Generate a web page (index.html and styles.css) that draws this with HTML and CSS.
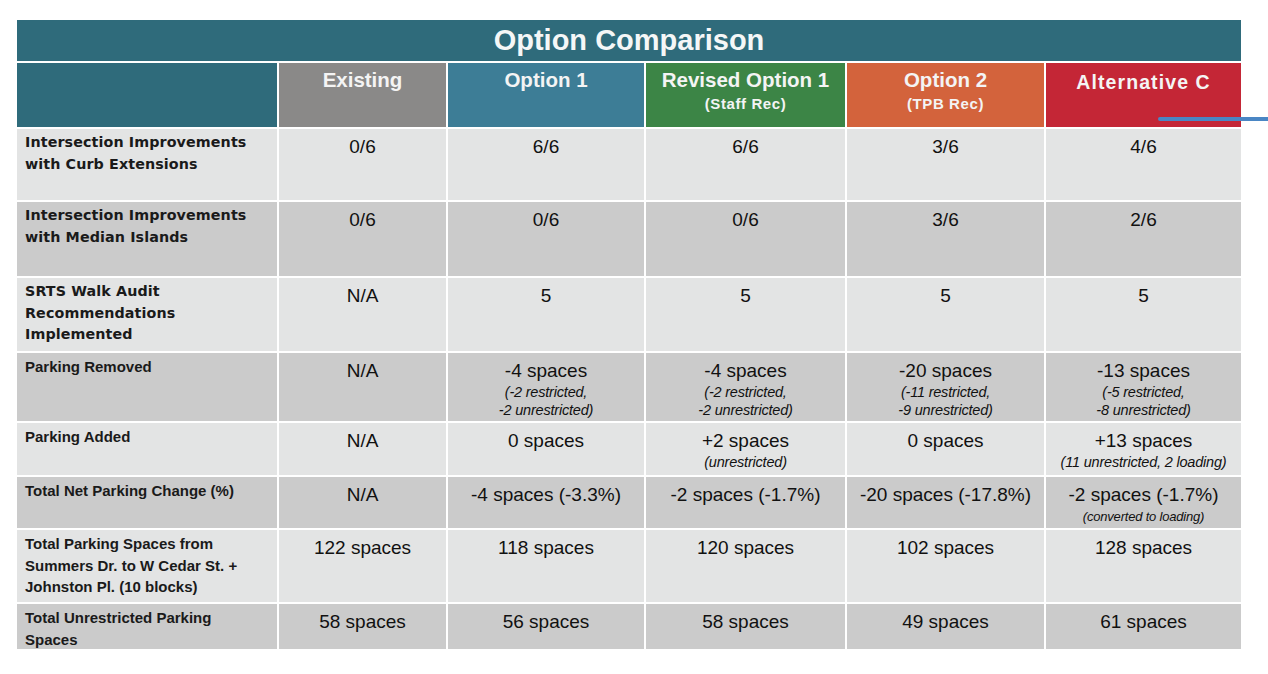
FILE: index.html
```html
<!DOCTYPE html>
<html lang="en">
<head>
<meta charset="utf-8">
<title>Option Comparison</title>
<link rel="stylesheet" href="styles.css">
</head>
<body>
<div class="page">
  <div class="sheet">
    <div class="title">Option Comparison</div>
    <div class="grid">
      <div class="hd hd-blank"></div>
      <div class="hd hd-existing">Existing</div>
      <div class="hd hd-opt1">Option 1</div>
      <div class="hd hd-rev">Revised Option 1<span class="sub">(Staff Rec)</span></div>
      <div class="hd hd-opt2">Option 2<span class="sub">(TPB Rec)</span></div>
      <div class="hd hd-altc">Alternative C</div>

      <div class="lbl wide light">Intersection Improvements<br>with Curb Extensions</div>
      <div class="val light">0/6</div>
      <div class="val light">6/6</div>
      <div class="val light">6/6</div>
      <div class="val light">3/6</div>
      <div class="val light">4/6</div>

      <div class="lbl wide dark">Intersection Improvements<br>with Median Islands</div>
      <div class="val dark">0/6</div>
      <div class="val dark">0/6</div>
      <div class="val dark">0/6</div>
      <div class="val dark">3/6</div>
      <div class="val dark">2/6</div>

      <div class="lbl wide light">SRTS Walk Audit<br>Recommendations<br>Implemented</div>
      <div class="val light">N/A</div>
      <div class="val light">5</div>
      <div class="val light">5</div>
      <div class="val light">5</div>
      <div class="val light">5</div>

      <div class="lbl dark">Parking Removed</div>
      <div class="val dark">N/A</div>
      <div class="val dark">-4 spaces<span class="note">(-2 restricted,<br>-2 unrestricted)</span></div>
      <div class="val dark">-4 spaces<span class="note">(-2 restricted,<br>-2 unrestricted)</span></div>
      <div class="val dark">-20 spaces<span class="note">(-11 restricted,<br>-9 unrestricted)</span></div>
      <div class="val dark">-13 spaces<span class="note">(-5 restricted,<br>-8 unrestricted)</span></div>

      <div class="lbl light">Parking Added</div>
      <div class="val light">N/A</div>
      <div class="val light">0 spaces</div>
      <div class="val light">+2 spaces<span class="note">(unrestricted)</span></div>
      <div class="val light">0 spaces</div>
      <div class="val light">+13 spaces<span class="note">(11 unrestricted, 2 loading)</span></div>

      <div class="lbl dark">Total Net Parking Change (%)</div>
      <div class="val dark">N/A</div>
      <div class="val dark">-4 spaces (-3.3%)</div>
      <div class="val dark">-2 spaces (-1.7%)</div>
      <div class="val dark">-20 spaces (-17.8%)</div>
      <div class="val dark">-2 spaces (-1.7%)<span class="note small">(converted to loading)</span></div>

      <div class="lbl light">Total Parking Spaces from<br>Summers Dr. to W Cedar St. +<br>Johnston Pl. (10 blocks)</div>
      <div class="val light">122 spaces</div>
      <div class="val light">118 spaces</div>
      <div class="val light">120 spaces</div>
      <div class="val light">102 spaces</div>
      <div class="val light">128 spaces</div>

      <div class="lbl dark">Total Unrestricted Parking<br>Spaces</div>
      <div class="val dark">58 spaces</div>
      <div class="val dark">56 spaces</div>
      <div class="val dark">58 spaces</div>
      <div class="val dark">49 spaces</div>
      <div class="val dark">61 spaces</div>
    </div>
  </div>
  <div class="pointer"></div>
</div>
</body>
</html>
```

FILE: styles.css
```css
* { box-sizing: border-box; }

html, body {
  margin: 0;
  padding: 0;
  background: #ffffff;
}

body {
  font-family: "Liberation Sans", Arial, sans-serif;
  color: #141414;
}

.page {
  position: relative;
  width: 1268px;
  height: 674px;
  padding: 20px 0 0 17px;
}

.sheet {
  width: 1224px;
}

.title {
  height: 41px;
  background: #2f6b7b;
  color: #f5f7f7;
  font-weight: 700;
  font-size: 29px;
  line-height: 41px;
  text-align: center;
  margin-bottom: 2px;
}

.grid {
  display: grid;
  grid-template-columns: 260px 167px 196px 199px 197px 195px;
  grid-template-rows: 64px 71px 74px 73px 68px 52px 51px 72px 45px;
  gap: 2px;
}

.hd {
  color: #f4f4f4;
  font-weight: 700;
  font-size: 20.5px;
  line-height: 24px;
  text-align: center;
  padding-top: 5px;
}

.hd .sub {
  display: block;
  font-size: 15px;
  line-height: 18px;
  letter-spacing: 0.6px;
  margin-top: 3px;
}

.hd-blank { background: #2f6b7b; }
.hd-existing { background: #8a8988; }
.hd-opt1 { background: #3d7d96; }
.hd-rev { background: #3c8546; }
.hd-opt2 { background: #d3633c; }
.hd-altc {
  background: #c42636;
  font-weight: 600;
  font-size: 19.5px;
  letter-spacing: 1.1px;
  padding-top: 7px;
}

.light { background: #e3e4e4; }
.dark { background: #cbcbcb; }

.lbl {
  font-weight: 700;
  font-size: 15px;
  line-height: 21.5px;
  padding: 3px 0 0 8px;
  white-space: nowrap;
  color: #1a1a1a;
}

.lbl.wide {
  font-family: "DejaVu Sans", sans-serif;
  font-size: 14.3px;
  letter-spacing: 0.1px;
}

.val {
  font-size: 19px;
  line-height: 22px;
  text-align: center;
  padding-top: 7px;
  color: #111111;
}

.val .note {
  display: block;
  font-style: italic;
  font-size: 14.5px;
  line-height: 18px;
  margin-top: 1px;
  letter-spacing: -0.2px;
}

.val .note.small {
  font-size: 13px;
  margin-top: 2px;
}

.pointer {
  position: absolute;
  left: 1158px;
  top: 117px;
  width: 110px;
  height: 4px;
  border-radius: 2px 0 0 2px;
  background: #4a86c4;
}
```
